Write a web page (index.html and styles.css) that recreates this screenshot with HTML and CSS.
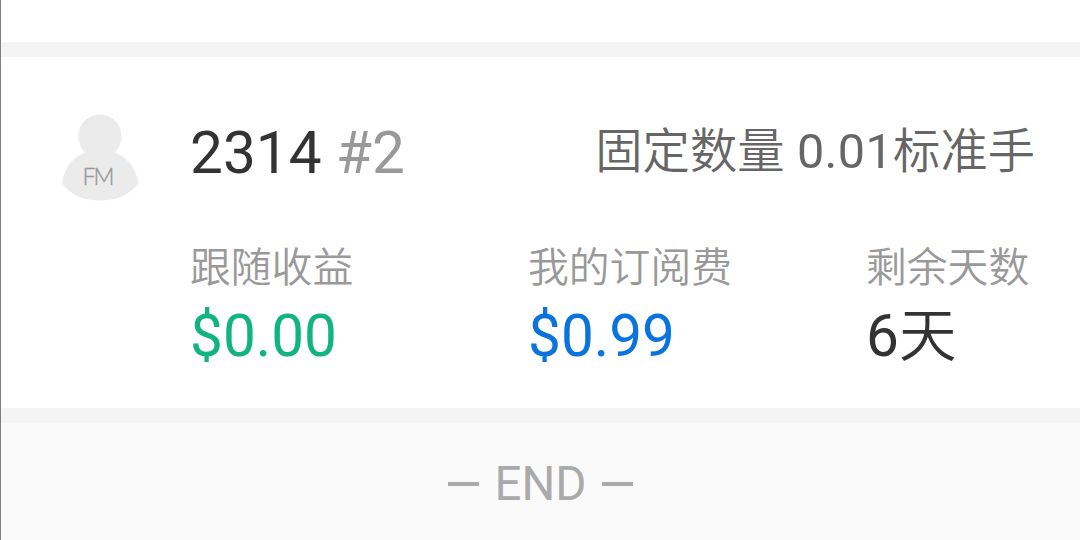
FILE: index.html
```html
<!DOCTYPE html>
<html lang="zh-CN">
<head>
    <meta charset="UTF-8">
    <meta name="viewport" content="width=device-width, initial-scale=1.0">
    <title>订阅</title>
    <link rel="stylesheet" href="styles.css">
</head>
<body>
    <div class="top-strip"></div>

    <section class="card">
        <!-- Avatar -->
        <svg class="avatar" viewBox="0 0 78 88">
            <path d="M39 0.5C51 0.5 60.5 10 60.5 22C60.5 29 58 34 54 38.500C66 43 75 54 77.500 69C69 81 55 86.500 39 86.500C23 86.500 9 81 1 69C3 54 12 43 24 38.500C20 34 17.500 29 17.500 22C17.500 10 27 0.500 39 0.500Z" />
            <text x="21.500" y="71" textLength="32">FM</text>
        </svg>

        <div class="content">
            <div class="card-header">
                <h2>2314 <span>#2</span></h2>
                <p class="volume">固定数量<span> 0.01</span>标准手</p>
            </div>

            <div class="stats">
                <div class="stat">
                    <p class="label">跟随收益</p>
                    <p class="value green">$0.00</p>
                </div>
                <div class="stat">
                    <p class="label">我的订阅费</p>
                    <p class="value blue">$0.99</p>
                </div>
                <div class="stat">
                    <p class="label">剩余天数</p>
                    <p class="value">6<span>天</span></p>
                </div>
            </div>
        </div>
    </section>

    <footer>
        <span class="line"></span>
        <p>END</p>
        <span class="line"></span>
    </footer>
</body>
</html>
```
FILE: styles.css
```css
/* Basic Reset */
* {
    margin: 0;
    padding: 0;
    box-sizing: border-box;
}

body {
    width: 1080px;
    height: 540px;
    overflow: hidden;
    background: #fafafa;
    border-left: 1px solid #808080;
    font-family: Roboto, "Noto Sans CJK SC", sans-serif;
    color: #333;
}

.top-strip {
    height: 42px;
    background: #fff;
}

/* Subscription card */
.card {
    display: flex;
    height: 381px;
    padding: 57px 0 0 60px;
    background: #fff;
    border-top: 15px solid #f4f4f4;
    border-bottom: 15px solid #f4f4f4;
}

.avatar {
    flex: none;
    width: 78px;
    height: 88px;
    fill: #ebebeb;
}

.avatar text {
    font-family: Lato, sans-serif;
    font-size: 23px;
    font-weight: 300;
    fill: #999;
    stroke: #999;
    stroke-width: 0.4px;
}

.content {
    flex: 1;
    margin-left: 51px;
}

.card-header {
    display: flex;
    justify-content: space-between;
    height: 128px;
    padding-right: 45px;
}

h2 {
    font-size: 58.5px;
    font-weight: 400;
    line-height: 78px;
}

h2 span {
    color: #999;
}

.volume {
    font-size: 47.3px;
    font-weight: 350;
    line-height: 75px;
    color: #666;
}

.volume span {
    font-size: 48.5px;
    font-weight: 400;
    letter-spacing: 0.4px;
}

/* Stats */
.stats {
    display: grid;
    grid-template-columns: 338px 338px 1fr;
}

.label {
    font-size: 40.8px;
    font-weight: 350;
    line-height: 52px;
    color: #999;
}

.value {
    font-size: 58.5px;
    font-weight: 400;
    line-height: 84px;
}

.value span {
    font-size: 57.5px;
    font-weight: 350;
}

.green {
    color: #11b57c;
}

.blue {
    color: #0b73dd;
}

/* Footer */
footer {
    display: flex;
    justify-content: center;
    align-items: center;
    gap: 15px;
    height: 122px;
    font-size: 47.5px;
    color: #aaa;
}

.line {
    width: 31px;
    height: 4px;
    background: #aaa;
}
```
